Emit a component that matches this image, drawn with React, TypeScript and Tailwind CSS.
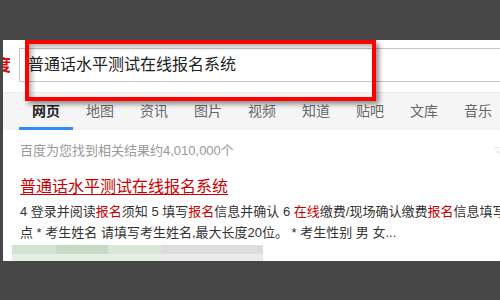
import React from "react";

const tabs = ["网页", "地图", "资讯", "图片", "视频", "知道", "贴吧", "文库", "音乐"];

const font = { fontFamily: '"Liberation Sans", "Noto Sans CJK SC", sans-serif' };

const App = () => {
  return (
    <div className="w-[500px] h-[300px] bg-[#474747] pt-[40px] pl-[3px] overflow-hidden" style={font}>
      <div className="relative w-[497px] h-[221px] bg-white overflow-hidden">
        {/* logo (cut off) + search input */}
        <div className="flex items-center pt-[8px] h-[42px]">
          <div className="w-[7px] mr-[9px] shrink-0 overflow-hidden flex justify-end">
            <span className="text-[#e10602] font-bold text-[17px] leading-none whitespace-nowrap -mr-[1px]">百度</span>
          </div>
          <div className="shrink-0 w-[520px] h-[34px] border border-[#c4c7ce] flex items-center pl-[8px] text-[16px] text-[#222]">
            普通话水平测试在线报名系统
          </div>
        </div>

        {/* tabs */}
        <div className="mt-[10px] h-[38px] bg-[#f5f5f6] border-t border-[#ebebeb] flex pl-[16px]">
          {tabs.map((t, i) => (
            <div
              key={t}
              className={`w-[54px] shrink-0 flex items-center justify-center text-[14px] relative ${
                i === 0 ? "text-[#222] font-bold" : "text-[#666]"
              }`}
            >
              {t}
              {i === 0 && <span className="absolute left-0 bottom-0 w-[54px] h-[3px] bg-[#3388ff]" />}
            </div>
          ))}
        </div>

        {/* result count */}
        <div className="flex items-center justify-between pl-[17px] mt-[12px] h-[16px]">
          <span className="text-[13px] text-[#999] leading-none">百度为您找到相关结果约4,010,000个</span>
          <span className="text-[7px] text-[#aaa] leading-none -mr-[2px]">▽</span>
        </div>

        {/* result */}
        <div className="pl-[17px] mt-[17px]">
          <a className="text-[16px] text-[#cc0000] underline leading-[20px] underline-offset-2">普通话水平测试在线报名系统</a>
          <div className="text-[13px] text-[#333] leading-[21px] whitespace-nowrap mt-[2px]">
            4 登录并阅读<span className="text-[#cc0000]">报名</span>须知 5 填写<span className="text-[#cc0000]">报名</span>信息并确认 6{" "}
            <span className="text-[#cc0000]">在线</span>缴费/现场确认缴费<span className="text-[#cc0000]">报名</span>信息填写
          </div>
          <div className="text-[13px] text-[#333] leading-[21px] whitespace-nowrap">
            点 * 考生姓名 请填写考生姓名,最大长度20位。 * 考生性别 男 女...
          </div>
        </div>

        {/* blurred bar */}
        <div className="ml-[9px] mt-[2px] w-[251px] flex flex-col">
          <div className="flex h-[9px]">
            <div className="w-[44px] bg-[#d3e3d3]" />
            <div className="w-[52px] bg-[#c6dac6]" />
            <div className="w-[54px] bg-[#d8e7d8]" />
            <div className="flex-1 bg-[#dcdcdc]" />
          </div>
          <div className="flex h-[9px]">
            <div className="w-[150px] bg-[#e5eee5]" />
            <div className="flex-1 bg-[#ebebeb]" />
          </div>
        </div>

        {/* red highlight box */}
        <div className="absolute left-[22px] top-0 w-[351px] h-[61px] border-[4px] border-[#ff0000] shadow-[3px_3px_5px_rgba(0,0,0,0.45),inset_3px_3px_5px_rgba(0,0,0,0.3)]" />
      </div>
    </div>
  );
};

export default App;
